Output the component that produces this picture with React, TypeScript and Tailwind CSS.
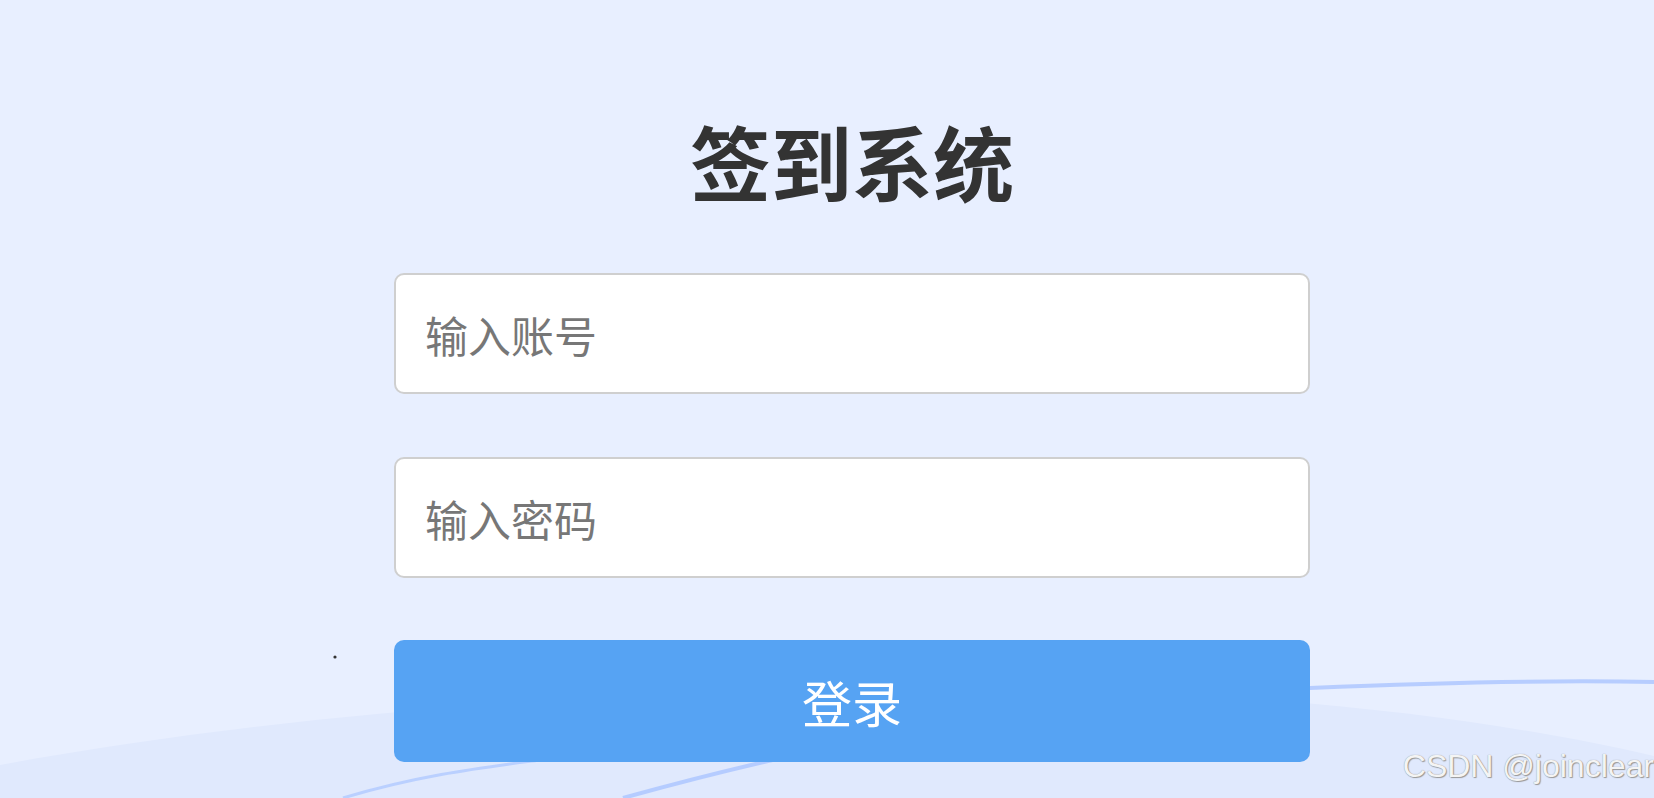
export default function App() {
  return (
    <div className="relative h-[798px] w-full overflow-hidden bg-[#e8efff] font-['Noto_Sans_CJK_SC','Noto_Sans',sans-serif]">
      {/* background waves */}
      <svg
        className="pointer-events-none absolute inset-0 h-full w-full"
        viewBox="0 0 1654 798"
        preserveAspectRatio="none"
      >
        <path d="M0 765 C 350 700, 800 680, 1050 688 C 1300 696, 1500 720, 1654 756 L1654 798 L0 798 Z" fill="#e0e9fd" />
        <path d="M623 798 C 760 760, 1000 700, 1310 688 C 1450 682, 1560 680, 1654 682" fill="none" stroke="#aac4ff" strokeWidth="4" opacity="0.8" />
        <path d="M343 798 C 420 775, 480 768, 540 760 C 620 745, 700 730, 760 720" fill="none" stroke="#aac4ff" strokeWidth="3" opacity="0.7" />
        <circle cx="335" cy="657" r="1.6" fill="#333" />
      </svg>

      <div className="relative flex justify-center pl-[50px] pt-[119px]">
        <div className="flex w-[916px] flex-col items-center">
          <h1 className="text-[81px] font-bold leading-none text-[#333]">签到系统</h1>

          <input
            className="mt-[73px] h-[121px] w-full rounded-[10px] border-2 border-[#cfcfcf] bg-white pl-[29px] text-[43px] text-[#333] outline-none placeholder:text-[#777]"
            placeholder="输入账号"
          />
          <input
            type="password"
            className="mt-[63px] h-[121px] w-full rounded-[10px] border-2 border-[#cfcfcf] bg-white pl-[29px] text-[43px] text-[#333] outline-none placeholder:text-[#777]"
            placeholder="输入密码"
          />
          <button className="mt-[62px] h-[122px] w-full rounded-[10px] bg-[#56a3f3] text-[50px] text-white">
            登录
          </button>
        </div>
      </div>

      <div className="absolute bottom-[16px] right-0 font-['Liberation_Sans',sans-serif] text-[32px] leading-none text-[#f4f4f4] [text-shadow:0_0_1px_#888,1px_1px_1px_#999]">
        CSDN @joinclear
      </div>
    </div>
  );
}
